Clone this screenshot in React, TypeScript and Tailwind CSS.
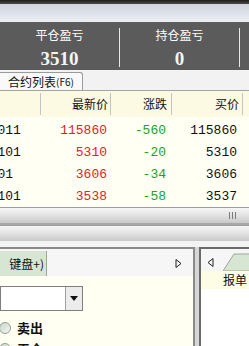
import React from "react";

const cjk = { fontFamily: '"Noto Sans CJK SC", "Liberation Sans", sans-serif' };
const mono = { fontFamily: '"Liberation Mono", "Noto Sans CJK SC", monospace' };

const rows = [
  { code: "cu2011", last: "115860", chg: "-560", bid: "115860" },
  { code: "rb2101", last: "5310", chg: "-20", bid: "5310" },
  { code: "MA101", last: "3606", chg: "-34", bid: "3606" },
  { code: "ru2101", last: "3538", chg: "-58", bid: "3537" },
];

function Stat({ label, value }: { label: string; value: string }) {
  return (
    <div className="flex-1 flex flex-col items-center pt-[5px]">
      <span className="text-[12px] leading-[16px] text-white" style={cjk}>
        {label}
      </span>
      <span
        className="text-[19px] leading-[22px] font-bold text-[#f4f4f4] mt-[5px]"
        style={{ fontFamily: '"Liberation Serif", serif' }}
      >
        {value}
      </span>
    </div>
  );
}

function ScrollBar({ grip }: { grip?: boolean }) {
  return (
    <div className="h-[16px] shrink-0 bg-gradient-to-b from-[#f6f6f6] via-[#e2e2e2] to-[#c9c9c9] border-t border-[#9c9c9c] flex items-center justify-end pr-[13px]">
      {grip && (
        <div className="flex gap-[2px]">
          <span className="w-[1px] h-[7px] bg-[#7a7a7a]" />
          <span className="w-[1px] h-[7px] bg-[#7a7a7a]" />
          <span className="w-[1px] h-[7px] bg-[#7a7a7a]" />
        </div>
      )}
    </div>
  );
}

function Radio({ label }: { label: string }) {
  return (
    <div className="h-[21px] shrink-0 flex items-center">
      <span className="w-[12px] h-[12px] ml-[-1px] rounded-full border border-[#9a9a9a] bg-gradient-to-br from-[#c4d9c4] to-[#f6f6f6]" />
      <span className="ml-[6px] text-[13px] font-bold text-[#111]">{label}</span>
    </div>
  );
}

export default function App() {
  return (
    <div className="w-[249px] h-[346px] overflow-hidden bg-[#f0f0f0] flex flex-col" style={cjk}>
      {/* top chrome */}
      <div className="h-[4px] shrink-0 bg-gradient-to-b from-[#1e1e1e] to-[#4a4a4a]" />
      <div className="h-[18px] shrink-0 bg-gradient-to-b from-[#cfd3de] to-[#eef0f5]" />

      {/* P&L panel */}
      <div className="h-[48px] shrink-0 bg-[#5b5b5b] flex">
        <Stat label="平仓盈亏" value="3510" />
        <div className="w-[1px] bg-[#e8e8e8] mt-[6px] mb-[3px]" />
        <Stat label="持仓盈亏" value="0" />
        <div className="w-[1px] bg-[#e8e8e8] mt-[6px] mb-[3px]" />
        <div className="w-[9px]" />
      </div>

      {/* tab strip */}
      <div className="h-[21px] shrink-0 bg-[#f2f2f2] border-b border-[#a3a3a3] flex items-end">
        <div className="h-[18px] w-[83px] bg-[#f9f9f9] border border-b-0 border-l-0 border-[#9a9a9a] rounded-tr-[3px] flex items-center pl-[8px] text-[12px] text-[#111]">
          合约列表<span className="text-[10px]">(F6)</span>
        </div>
      </div>

      {/* table */}
      <div className="h-[116px] shrink-0 bg-[#fffff4] flex flex-col overflow-hidden">
        <div className="h-[26px] shrink-0 bg-[#fdfae3] flex items-stretch text-[12px] text-[#111]">
          <div className="w-[41px] border-r border-[#c4c4c4] my-[2px]" />
          <div className="w-[70px] border-r border-[#c4c4c4] my-[2px] flex items-center justify-end pr-[2px]">最新价</div>
          <div className="w-[61px] border-r border-[#c4c4c4] my-[2px] flex items-center justify-end pr-[4px]">涨跌</div>
          <div className="w-[71px] border-r border-[#c4c4c4] my-[2px] flex items-center justify-end pr-[3px]">买价</div>
          <div className="flex-1" />
        </div>
        <div className="flex flex-col pt-[3px] text-[13px]" style={mono}>
          {rows.map((r) => (
            <div key={r.code} className="h-[22px] shrink-0 flex items-center">
              <div className="w-[41px] overflow-hidden whitespace-nowrap text-[#111]">
                <span className="ml-[-26px]">{r.code}</span>
              </div>
              <div className="w-[70px] text-right pr-[4px] text-[#e5202a]">{r.last}</div>
              <div className="w-[61px] text-right pr-[6px] text-[#21a321]">{r.chg}</div>
              <div className="w-[71px] text-right pr-[6px] text-[#111]">{r.bid}</div>
            </div>
          ))}
        </div>
      </div>

      {/* scroll bars */}
      <ScrollBar grip />
      <div className="h-[2px] shrink-0 bg-[#a8a8a8]" />
      <ScrollBar />
      <div className="h-[6px] shrink-0 bg-[#f3f3f3]" />

      {/* lower panels */}
      <div className="flex-1 min-h-0 flex bg-[#d6d6d6] overflow-hidden">
        <div className="w-[195px] bg-[#fffff2] border-t-2 border-r-2 border-[#8a8a8a] flex flex-col">
          <div className="h-[27px] shrink-0 bg-[#f6f6f6] flex items-end relative">
            <div className="h-[25px] w-[47px] bg-[#d7e6d3] border-r border-[#9aa89a] flex items-center justify-end pr-[2px] text-[12px] text-[#111] whitespace-nowrap overflow-hidden">
              键盘+)
            </div>
            <svg className="absolute left-[175px] top-[10px]" width="7" height="9" viewBox="0 0 7 9">
              <path d="M1 0.5 L6 4.5 L1 8.5 Z" fill="none" stroke="#222" strokeWidth="1" />
            </svg>
          </div>
          <div className="pt-[10px] flex flex-col">
            <div className="w-[83px] h-[25px] shrink-0 border border-[#7f7f7f] bg-white flex justify-end">
              <div className="w-[17px] h-full border-l border-[#a0a0a0] bg-[#ececec] flex items-center justify-center">
                <svg width="8" height="5" viewBox="0 0 8 5">
                  <path d="M0 0 L8 0 L4 5 Z" fill="#111" />
                </svg>
              </div>
            </div>
            <div className="mt-[6px]">
              <Radio label="卖出" />
              <Radio label="平仓" />
            </div>
          </div>
        </div>
        <div className="w-[4px] shrink-0" />
        <div className="flex-1 bg-white border-l-2 border-t-2 border-[#6a6a6a] flex flex-col">
          <div className="h-[22px] shrink-0 bg-[#f6f6f6] relative">
            <svg className="absolute left-[6px] top-[9px]" width="7" height="9" viewBox="0 0 7 9">
              <path d="M6 0.5 L1 4.5 L6 8.5 Z" fill="none" stroke="#222" strokeWidth="1" />
            </svg>
            <svg className="absolute left-[22px] top-[4px]" width="30" height="18" viewBox="0 0 30 18">
              <path d="M0 18 L11 1 L30 1 L30 18 Z" fill="#d7e6d3" stroke="#9aa89a" strokeWidth="1" />
            </svg>
          </div>
          <div className="h-[18px] shrink-0 bg-[#fdfde6] flex items-center pl-[22px] text-[12px] text-[#111] whitespace-nowrap">
            报单
          </div>
        </div>
      </div>
    </div>
  );
}
